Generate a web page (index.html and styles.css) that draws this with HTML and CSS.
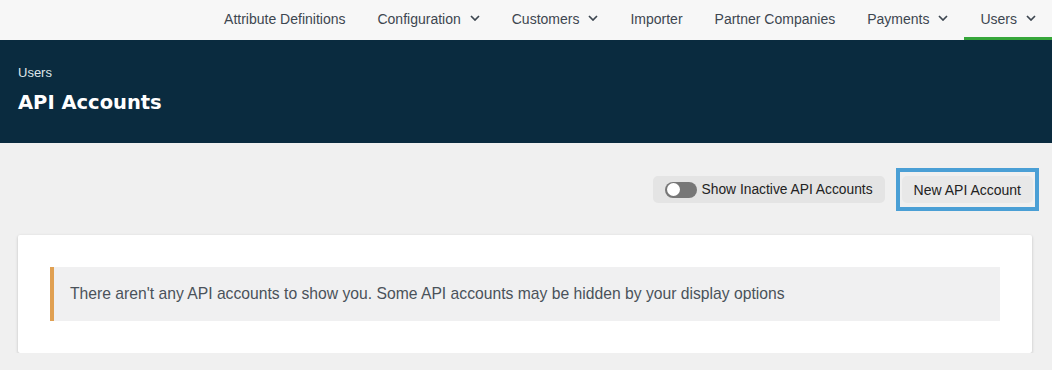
FILE: index.html
```html
<!DOCTYPE html>
<html lang="en">
<head>
  <meta charset="UTF-8">
  <title>API Accounts</title>
  <link rel="stylesheet" href="styles.css">
</head>
<body>
<nav class="topnav">
  <a class="nav-item" href="#">Attribute Definitions</a>
  <a class="nav-item" href="#">Configuration <svg class="chev" viewBox="0 0 10 6"><polyline points="1,1 5,5 9,1"/></svg></a>
  <a class="nav-item" href="#">Customers <svg class="chev" viewBox="0 0 10 6"><polyline points="1,1 5,5 9,1"/></svg></a>
  <a class="nav-item" href="#">Importer</a>
  <a class="nav-item" href="#">Partner Companies</a>
  <a class="nav-item" href="#">Payments <svg class="chev" viewBox="0 0 10 6"><polyline points="1,1 5,5 9,1"/></svg></a>
  <a class="nav-item active" href="#">Users <svg class="chev" viewBox="0 0 10 6"><polyline points="1,1 5,5 9,1"/></svg></a>
</nav>

<header class="page-header">
  <div class="crumb">Users</div>
  <h1>API Accounts</h1>
</header>

<main class="content">
  <div class="actions">
    <label class="toggle">
      <span class="switch"><span class="knob"></span></span>
      Show Inactive API Accounts
    </label>
    <span class="focus-ring"><button class="btn-new">New API Account</button></span>
  </div>

  <div class="card">
    <div class="notice">There aren't any API accounts to show you. Some API accounts may be hidden by your display options</div>
  </div>
</main>
</body>
</html>
```

FILE: styles.css
```css
body {
  margin: 0;
  background: #f0f0f0;
  font-family: "Liberation Sans", Arial, sans-serif;
  color: #333;
}

.topnav {
  display: flex;
  justify-content: flex-end;
  height: 40px;
  background: #f7f7f7;
}

.nav-item {
  display: flex;
  align-items: center;
  padding: 0 16px;
  font-size: 14px;
  color: #3d4650;
  text-decoration: none;
  border-bottom: 3px solid transparent;
  box-sizing: border-box;
  height: 40px;
}
.nav-item.active {
  border-bottom-color: #36a63a;
}

.chev {
  width: 10px;
  height: 6px;
  margin: -1px 0 0 9px;
  fill: none;
  stroke: #3d4650;
  stroke-width: 1.7;
}

.page-header {
  background: #0a2b3f;
  height: 103px;
  padding: 25px 18px 0;
  box-sizing: border-box;
  color: #fff;
}
.crumb {
  font-size: 13px;
  color: #dfe6ea;
}
.page-header h1 {
  font-family: "DejaVu Sans", Verdana, sans-serif;
  font-size: 19.5px;
  font-weight: bold;
  margin: 11px 0 0;
}

.content {
  padding: 25px 20px 0 18px;
}

.actions {
  display: flex;
  justify-content: flex-end;
  align-items: center;
  gap: 11px;
  margin-right: -7px;
}

.toggle {
  display: flex;
  align-items: center;
  height: 27px;
  padding: 0 12px;
  background: #e4e4e4;
  border-radius: 5px;
  font-size: 13.8px;
  color: #222;
}
.switch {
  width: 32px;
  height: 16px;
  border-radius: 8px;
  background: #777;
  margin-right: 5px;
  display: flex;
  align-items: center;
  padding: 0 2px;
  box-sizing: border-box;
}
.knob {
  width: 13px;
  height: 13px;
  border-radius: 50%;
  background: #fff;
}

.focus-ring {
  display: flex;
  border: 4px solid #4a9fd5;
  padding: 4px 2px;
}

.btn-new {
  font-family: inherit;
  font-size: 14px;
  color: #222;
  background: #e8e8e8;
  border: none;
  border-radius: 5px;
  height: 27px;
  padding: 0 12px;
}

.card {
  margin-top: 24px;
  background: #fff;
  border-radius: 2px;
  box-shadow: 0 1px 3px rgba(0, 0, 0, 0.22);
  padding: 32px 32px;
}

.notice {
  background: #f0f0f1;
  border-left: 4px solid #e0a052;
  padding: 0 16px;
  height: 54px;
  display: flex;
  align-items: center;
  font-size: 15.7px;
  color: #4a525a;
}
```
